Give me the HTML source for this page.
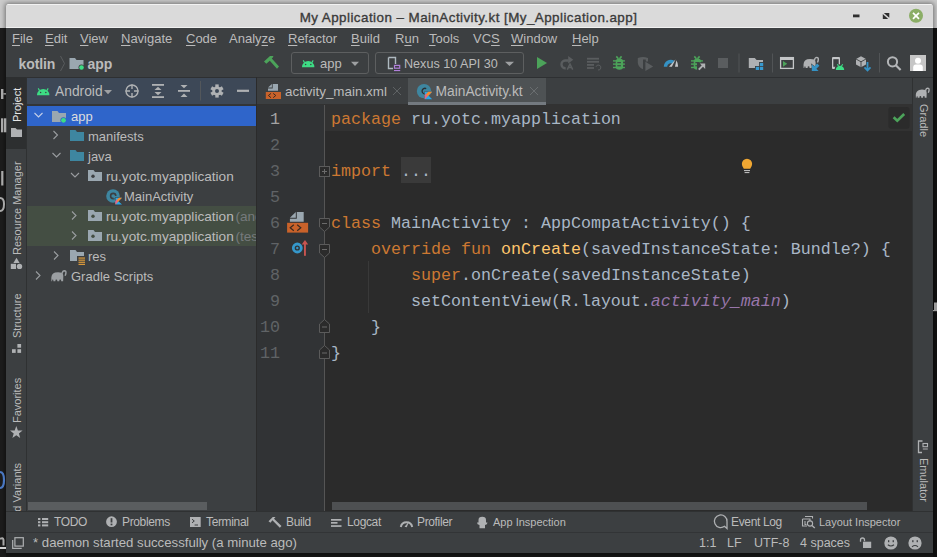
<!DOCTYPE html>
<html><head><meta charset="utf-8">
<style>
*{margin:0;padding:0;box-sizing:border-box}
html,body{width:937px;height:557px;overflow:hidden;background:#161616;font-family:"Liberation Sans",sans-serif;position:relative}
.a{position:absolute}
.t{position:absolute;white-space:nowrap;font-size:13px;color:#bbbbbb;line-height:16px}
.clip{position:absolute;overflow:hidden}
.code{font-family:"Liberation Mono",monospace;font-size:16.67px;color:#a9b7c6;white-space:pre;position:absolute;left:332px;line-height:26px}
.ln{font-family:"Liberation Mono",monospace;font-size:16.67px;color:#606366;position:absolute;width:40px;text-align:right;left:240px;line-height:26px}
.kw{color:#cc7832}.fn{color:#ffc66d}.pu{color:#9876aa;font-style:italic}
.menu{position:absolute;top:32px;font-size:13px;color:#bbbbbb;white-space:nowrap;line-height:14px}
.menu u{text-decoration:underline;text-underline-offset:2px;text-decoration-thickness:1px}
.rl{transform-origin:0 0;transform:rotate(-90deg)}
.rr{transform-origin:0 0;transform:rotate(90deg)}
</style></head><body>
<!-- ===== backdrop ===== -->
<div class="a" style="left:0;top:0;width:937px;height:28px;background:#cbcbcb"></div>
<div class="a" style="left:0;top:28px;width:6px;height:529px;background:#1c1c1c"></div>
<div class="a" style="left:933px;top:28px;width:4px;height:529px;background:#101010"></div>

<!-- ===== window ===== -->
<div class="a" style="left:6px;top:4px;width:927px;height:549px;background:#3c3f41;border-radius:2px 2px 0 0;box-shadow:0 0 5px 1px rgba(0,0,0,0.45)"></div>
<div class="a" style="left:6px;top:4px;width:927px;height:24px;background:#dadada;border-radius:2px 2px 0 0;border-top:1px solid #f2f2f2;border-bottom:1px solid #f0f0f0"></div>
<div class="t" style="left:0;top:10px;width:937px;text-align:center;font-size:13.4px;color:#3a3a3a;font-weight:normal;letter-spacing:0.45px;-webkit-text-stroke:0.35px #3a3a3a">My Application – MainActivity.kt [My_Application.app]</div>

<!-- menu -->
<div class="menu" style="left:12px"><u>F</u>ile</div>
<div class="menu" style="left:45px"><u>E</u>dit</div>
<div class="menu" style="left:80px"><u>V</u>iew</div>
<div class="menu" style="left:121px"><u>N</u>avigate</div>
<div class="menu" style="left:186px"><u>C</u>ode</div>
<div class="menu" style="left:229px">Analy<u>z</u>e</div>
<div class="menu" style="left:288px"><u>R</u>efactor</div>
<div class="menu" style="left:351px"><u>B</u>uild</div>
<div class="menu" style="left:395px">R<u>u</u>n</div>
<div class="menu" style="left:429px"><u>T</u>ools</div>
<div class="menu" style="left:473px">VC<u>S</u></div>
<div class="menu" style="left:511px"><u>W</u>indow</div>
<div class="menu" style="left:572px"><u>H</u>elp</div>

<!-- nav bar -->
<div class="t" style="left:18.5px;top:55.5px;font-weight:bold;font-size:14px;letter-spacing:-0.1px">kotlin</div>
<div class="t" style="left:87.5px;top:55.5px;font-weight:bold;font-size:14px">app</div>

<!-- toolbar combos -->
<div class="a" style="left:291px;top:52px;width:78px;height:22px;border:1px solid #5d5f60;border-radius:3px"></div>
<div class="t" style="left:320px;top:56px">app</div>
<div class="a" style="left:375px;top:52px;width:149px;height:22px;border:1px solid #5d5f60;border-radius:3px"></div>
<div class="t" style="left:404px;top:56px;font-size:12.6px">Nexus 10 API 30</div>
<div class="a" style="left:6px;top:77px;width:927px;height:1px;background:#2e3032"></div>

<!-- ===== left stripe ===== -->
<div class="a" style="left:6px;top:77px;width:20px;height:72px;background:#2d2f30"></div>
<div class="a" style="left:26px;top:77px;width:1px;height:434px;background:#2f3132"></div>

<!-- ===== project panel ===== -->
<div class="a" style="left:27px;top:78px;width:229px;height:26px;background:#3d4857"></div>
<div class="a" style="left:27px;top:104px;width:229px;height:2px;background:#333537"></div>
<div class="a" style="left:27px;top:106px;width:229px;height:20px;background:#2f65ca"></div>
<div class="a" style="left:27px;top:206px;width:229px;height:40px;background:#444e43"></div>
<div class="a" style="left:28px;top:502px;width:179px;height:8px;background:#5a5d5f"></div>
<div class="a" style="left:256px;top:77px;width:1px;height:434px;background:#2b2b2b"></div>
<div class="t" style="left:55px;top:84px;font-size:13.8px">Android</div>
<div class="clip" style="left:27px;top:77px;width:229px;height:434px">
<div class="t" style="left:44px;top:32px;color:#dddddd">app</div>
<div class="t" style="left:61px;top:52px">manifests</div>
<div class="t" style="left:61px;top:72px">java</div>
<div class="t" style="left:79px;top:92px;font-size:13.6px">ru.yotc.myapplication</div>
<div class="t" style="left:97px;top:112px">MainActivity</div>
<div class="t" style="left:79px;top:132px;font-size:13.6px">ru.yotc.myapplication <span style="color:#767a7c;margin-left:-2px">(androidTest)</span></div>
<div class="t" style="left:79px;top:152px;font-size:13.6px">ru.yotc.myapplication <span style="color:#767a7c;margin-left:-2px">(test)</span></div>
<div class="t" style="left:61px;top:172px">res</div>
<div class="t" style="left:44px;top:192px">Gradle Scripts</div>
</div>

<!-- ===== editor ===== -->
<div class="a" style="left:257px;top:104px;width:655px;height:1px;background:#323232"></div>
<div class="a" style="left:408px;top:78px;width:138px;height:26px;background:#4e5254"></div>
<div class="a" style="left:408px;top:102px;width:138px;height:3px;background:#747a80"></div>
<div class="t" style="left:285px;top:84px;font-size:13.4px">activity_main.xml</div>
<div class="t" style="left:435.5px;top:84px;font-size:13.8px">MainActivity.kt</div>
<div class="a" style="left:257px;top:105px;width:655px;height:406px;background:#2b2b2b"></div>
<div class="a" style="left:257px;top:105px;width:67px;height:406px;background:#313335"></div>
<div class="a" style="left:324px;top:105px;width:1px;height:406px;background:#555555"></div>
<div class="a" style="left:325px;top:105px;width:587px;height:26px;background:#323232"></div>
<div class="a" style="left:332px;top:502px;width:535px;height:8px;background:#4e5052"></div>
<div class="a" style="left:401px;top:157px;width:30px;height:26px;background:#3a3a3a"></div>

<div class="ln" style="top:107px;color:#a4a3a3">1</div>
<div class="ln" style="top:133px">2</div>
<div class="ln" style="top:159px">3</div>
<div class="ln" style="top:185px">5</div>
<div class="ln" style="top:211px">6</div>
<div class="ln" style="top:237px">7</div>
<div class="ln" style="top:263px">8</div>
<div class="ln" style="top:289px">9</div>
<div class="ln" style="top:315px">10</div>
<div class="ln" style="top:341px">11</div>
<div class="code" style="left:331px;top:107px"><span class="kw">package</span> ru.yotc.myapplication</div>
<div class="code" style="left:331px;top:159px"><span class="kw">import</span> ...</div>
<div class="code" style="left:331px;top:211px"><span class="kw">class</span> MainActivity : AppCompatActivity() {</div>
<div class="code" style="left:331px;top:237px">    <span class="kw">override fun</span> <span class="fn">onCreate</span>(savedInstanceState: Bundle?) {</div>
<div class="code" style="left:331px;top:263px">        <span class="kw">super</span>.onCreate(savedInstanceState)</div>
<div class="code" style="left:331px;top:289px">        setContentView(R.layout.<span class="pu">activity_main</span>)</div>
<div class="code" style="left:331px;top:315px">    }</div>
<div class="code" style="left:331px;top:341px">}</div>

<!-- ===== right stripe ===== -->
<div class="a" style="left:912px;top:77px;width:1px;height:434px;background:#2f3132"></div>

<!-- ===== bottom toolbar + status ===== -->
<div class="a" style="left:6px;top:511px;width:927px;height:1px;background:#2f3132"></div>
<div class="a" style="left:6px;top:532px;width:927px;height:1px;background:#323436"></div>
<div class="t" style="left:54px;top:514px;font-size:12px;letter-spacing:-0.35px">TODO</div>
<div class="t" style="left:122px;top:514px;font-size:12px;letter-spacing:-0.35px">Problems</div>
<div class="t" style="left:206px;top:514px;font-size:12px;letter-spacing:-0.35px">Terminal</div>
<div class="t" style="left:286px;top:514px;font-size:12px;letter-spacing:-0.35px">Build</div>
<div class="t" style="left:347px;top:514px;font-size:12px;letter-spacing:-0.35px">Logcat</div>
<div class="t" style="left:417px;top:514px;font-size:12px;letter-spacing:-0.35px">Profiler</div>
<div class="t" style="left:493px;top:514px;font-size:11px">App Inspection</div>
<div class="t" style="left:731px;top:514px;font-size:12px;letter-spacing:-0.35px">Event Log</div>
<div class="t" style="left:819px;top:514px;font-size:11px">Layout Inspector</div>
<div class="t" style="left:33px;top:535px;font-size:13.2px">* daemon started successfully (a minute ago)</div>
<div class="t" style="left:699px;top:535px;font-size:12.5px">1:1</div>
<div class="t" style="left:727px;top:535px;font-size:12.5px">LF</div>
<div class="t" style="left:754px;top:535px;font-size:12.5px">UTF-8</div>
<div class="t" style="left:800px;top:535px;font-size:12.5px">4 spaces</div>

<!-- ===== stripe texts ===== -->
<div class="clip" style="left:6px;top:77px;width:20px;height:434px">
<div class="t rl" style="left:3px;top:45px;color:#e8e8e8;font-size:11px">Project</div>
<div class="t rl" style="left:3px;top:178px;font-size:11px">Resource Manager</div>
<div class="t rl" style="left:3px;top:261px;font-size:11px">Structure</div>
<div class="t rl" style="left:3px;top:345.5px;font-size:11px">Favorites</div>
<div class="t rl" style="left:3px;top:453px;font-size:11px">Build Variants</div>
</div>
<div class="clip" style="left:913px;top:77px;width:20px;height:434px">
<div class="t rr" style="left:18.5px;top:27px;font-size:11px">Gradle</div>
<div class="t rr" style="left:18.5px;top:381px;font-size:11px">Emulator</div>
</div>

<!-- ICONS -->
<svg class="a" style="left:0;top:0;pointer-events:none" width="937" height="557" viewBox="0 0 937 557">
<defs>
 <g id="droid"><path d="M0,6.2 A6.2,6.2 0 0 1 12.4,6.2 Z" fill="#3ddc84"/><path d="M2.6,1.6 L1.2,-0.6 M9.8,1.6 L11.2,-0.6" stroke="#3ddc84" stroke-width="1.1"/><circle cx="3.6" cy="3.6" r="0.75" fill="#3c3f41"/><circle cx="8.8" cy="3.6" r="0.75" fill="#3c3f41"/></g>
 <g id="eleph"><path fill="currentColor" d="M0.2,11.5 L0.1,8 Q0.5,3.6 4,2.6 Q7.5,1.8 11,2.8 Q12.4,3.5 12.5,6 L12.3,11.5 H10.3 L10.1,9.9 Q9.3,9.3 8.5,9.9 L8.3,11.5 H6.3 L6.1,9.9 Q5.3,9.3 4.5,9.9 L4.3,11.5 H2.3 L2.1,9.9 Q1.5,9.6 1.1,10 L0.9,11.5 Z"/><path fill="none" stroke="currentColor" stroke-width="1.5" d="M11.2,3.6 Q11.8,0.6 13.6,0.6 Q15.4,0.7 15.2,2.8 Q15,4.5 14.3,5.8"/></g>
</defs>
<!-- title buttons -->
<rect x="853" y="14.5" width="6.5" height="2.8" fill="#2f2f2f"/>
<path d="M884.3,12.9 H889.3 V17.4 L887.7,18.9 H882.8 V14.4 Z" fill="#2f2f2f"/><path d="M883,13.2 L889,18.6" stroke="#dadada" stroke-width="1.5"/>
<circle cx="916" cy="15.8" r="7" fill="#8bae66"/>
<path d="M913,12.8 L919,18.8 M919,12.8 L913,18.8" stroke="#fff" stroke-width="1.7"/>

<!-- nav bar -->
<path d="M60.5,56 L64.5,63.5 L60.5,71" fill="none" stroke="#595c5e" stroke-width="1"/>
<path d="M69.5,58 H75 L76.5,60 H83.5 V69 H69.5 Z" fill="#9aa7b0"/>
<circle cx="81.5" cy="67.5" r="3" fill="#3c3f41"/><circle cx="81.5" cy="67.5" r="2.3" fill="#3ddc84"/>

<!-- hammer -->
<path d="M264,61.5 L270,56.1 L273.2,56.1 L273.2,56.9 L271.8,58.5 L279,66.5 L277,68.8 L269.8,60.8 L266.3,63.7 Z" fill="#4ca35a"/>
<!-- combo app -->
<use href="#droid" transform="translate(302,61)"/>
<path d="M351,61.8 H359 L355,66 Z" fill="#9ea0a2"/>
<!-- combo nexus -->
<path d="M388.5,57.5 H395.5 V64 M393,68.5 H388.5 V57.5" fill="none" stroke="#aeb9c0" stroke-width="1.4"/>
<rect x="394.5" y="65.4" width="5.2" height="2.8" fill="none" stroke="#b07fd9" stroke-width="1.2"/>
<rect x="394" y="70" width="6.2" height="1.1" fill="#b07fd9"/>
<path d="M505,61.8 H514 L509.5,66 Z" fill="#9ea0a2"/>

<!-- run -->
<path d="M537,57 L547,63 L537,69 Z" fill="#4ca35a"/>
<!-- rerun (disabled) -->
<path d="M568.6,60.5 H565.1 A3.9,3.9 0 0 0 565.7,68.3" fill="none" stroke="#5a5d5f" stroke-width="2.4"/>
<path d="M568.2,56 L573.3,59.8 L568.2,63.4 Z" fill="#5a5d5f"/>
<path d="M567.3,69.6 L570,64 L572.7,69.6 M568.5,67.6 H571.5" fill="none" stroke="#5a5d5f" stroke-width="1.5"/>
<!-- apply changes -->
<g fill="#5a5d5f"><rect x="587" y="57.8" width="12" height="1.8"/><rect x="587" y="60.9" width="12" height="1.8"/><rect x="587" y="64" width="7" height="1.8"/><rect x="587" y="67.1" width="7" height="1.8"/></g>
<path d="M596,66.8 A2.5,2.5 0 1 1 598,70" fill="none" stroke="#5a5d5f" stroke-width="1"/>
<!-- debug bug -->
<g id="bug"><g fill="#4ca35a"><rect x="615.7" y="58.6" width="7.4" height="11.2" rx="3.7" ry="3.2"/><rect x="613" y="60.2" width="11.9" height="1.4"/><rect x="613" y="63.4" width="11.9" height="1.4"/><rect x="613" y="66.8" width="11.9" height="1.4"/></g>
<path d="M616.3,56.4 L618.4,58.8 M621.6,56.4 L619.5,58.8" stroke="#4ca35a" stroke-width="1.6"/>
<rect x="617.3" y="62.1" width="3.6" height="1.1" fill="#3c3f41"/><rect x="617.3" y="65.2" width="3.6" height="1.1" fill="#3c3f41"/></g>
<!-- coverage shield -->
<path d="M637.8,58 Q641,57 643,57 Q645,57 648,58 V61.5 H645.8 V59.6 H643 V69.2 Q638.5,67.5 637.8,63 Z" fill="#5a5d5f"/>
<path d="M645.4,61.8 L653.2,66.4 L645.4,71 Z" fill="#5a5d5f"/>
<!-- profiler -->
<path d="M663.8,66.8 A7,7 0 0 1 674.3,60.74 L672.6,63.68 A3.6,3.6 0 0 0 667.2,66.8 Z" fill="#3592c4"/>
<path d="M669,66.8 L671.9,66.8 L675.6,59.2 Z" fill="#c4c6c8"/>
<path d="M675,66.8 H678.1 Q677.9,62.6 676.4,60.3 Z" fill="#c4c6c8"/>
<!-- attach debugger -->
<use href="#bug" transform="translate(78,0)"/>
<rect x="697" y="62.3" width="9" height="9" fill="#3c3f41"/>
<path d="M698.8,69.6 L703.5,64.9" stroke="#afb1b3" stroke-width="2"/>
<path d="M699.8,63.6 H705.2 V69 Z" fill="#afb1b3"/>
<!-- stop -->
<rect x="718" y="58" width="10" height="10" fill="#5a5d5f"/>
<rect x="738.5" y="53.5" width="1" height="19" fill="#515456"/>
<!-- project structure -->
<path d="M748.8,58 H754.8 L756.6,60 H763 V62.1 H759.1 V66 H755 V67.9 H748.8 Z" fill="#afb1b3"/>
<g fill="#389ad0"><rect x="759.9" y="62.9" width="3.3" height="3.1"/><rect x="755.8" y="66.8" width="3.3" height="3.2"/><rect x="759.9" y="66.8" width="3.3" height="3.2"/></g>
<rect x="772" y="53.5" width="1" height="19" fill="#515456"/>
<!-- run anything window -->
<rect x="780.6" y="57.6" width="12.8" height="10.8" fill="none" stroke="#c4c6c8" stroke-width="1.3"/>
<rect x="780" y="57" width="14" height="3" fill="#c4c6c8"/>
<path d="M783,60.9 L787.2,63.8 L783,66.8 Z" fill="#4ca35a"/>
<!-- gradle sync -->
<use href="#eleph" style="color:#afb1b3" transform="translate(803.4,56.8) scale(0.98,0.98)"/>
<path d="M810.8,63.2 L813.2,70.6 L820,70.2 Z" fill="#3c3f41"/>
<path d="M811.8,64.3 V71 H818.6 L816.4,68.8 L819.4,65.8 L817.2,63.6 L814.2,66.6 Z" fill="#3592c4"/>
<!-- device manager -->
<path d="M833,57 H839 Q840,57 840,58 V68 Q840,69 839,69 H833 Q832,69 832,68 V58 Q832,57 833,57 Z" fill="#c4c6c8"/>
<rect x="833.3" y="59.2" width="5.4" height="7.6" fill="#3c3f41"/>
<path d="M834.5,70.8 V69.5 A5.3,5.3 0 0 1 845.1,69.5 V70.8 Z" fill="#3c3f41"/>
<path d="M835.8,69.9 A4.2,4.2 0 0 1 844.2,69.9 Z" fill="#3ddc84"/>
<path d="M837.3,64.3 L838.6,66.3 M842.7,64.3 L841.4,66.3" stroke="#3ddc84" stroke-width="1.1"/>
<!-- sdk manager -->
<path d="M856,59 L861,56.2 L866,59 V64.5 L861,67.3 L856,64.5 Z" fill="#afb1b3"/>
<path d="M856,59 L861,61.8 L866,59 M861,61.8 V67.3" fill="none" stroke="#3c3f41" stroke-width="0.9"/>
<path d="M867.5,62 V70 M864.5,67.3 L867.5,70.5 L870.5,67.3" fill="none" stroke="#3592c4" stroke-width="1.8"/>
<rect x="879" y="53" width="1" height="19.5" fill="#515456"/>
<!-- search -->
<circle cx="892.5" cy="61.8" r="4.6" fill="none" stroke="#b4b6b8" stroke-width="2"/>
<path d="M895.8,65.3 L900.6,70" stroke="#b4b6b8" stroke-width="2.2"/>
<!-- avatar -->
<rect x="910" y="55" width="16" height="16" fill="#c6c6c6"/>
<circle cx="918" cy="60.8" r="3" fill="#fff"/>
<path d="M913.2,71 V67.5 Q913.2,64.6 916,64.6 H920 Q922.8,64.6 922.8,67.5 V71 Z" fill="#fff"/>

<!-- project header icons -->
<use href="#droid" transform="translate(37,89)"/>
<path d="M104,90 H112 L108,94.3 Z" fill="#9ea0a2"/>
<circle cx="132" cy="91" r="6" fill="none" stroke="#afb1b3" stroke-width="1.4"/>
<path d="M132,84.5 V89 M132,93 V97.5 M125.5,91 H130 M134,91 H138.5" stroke="#afb1b3" stroke-width="1.4"/>
<g fill="#afb1b3"><rect x="152" y="84" width="12" height="1.8"/><rect x="152" y="96.2" width="12" height="1.8"/><path d="M154.5,90 L158,86.8 L161.5,90 Z"/><path d="M154.5,92 L158,95.2 L161.5,92 Z"/></g>
<g fill="#afb1b3"><rect x="178" y="90" width="12" height="1.8"/><path d="M180.5,85 L184,88.2 L187.5,85 Z"/><path d="M180.5,97 L184,93.6 L187.5,97 Z"/></g>
<rect x="200" y="81" width="1" height="19.5" fill="#53575b"/>
<g transform="translate(217,91)"><circle r="4.6" fill="#afb1b3"/><g fill="#afb1b3"><rect x="-1.7" y="-6.6" width="3.4" height="13.2"/><rect x="-1.7" y="-6.6" width="3.4" height="13.2" transform="rotate(60)"/><rect x="-1.7" y="-6.6" width="3.4" height="13.2" transform="rotate(120)"/></g><circle r="2" fill="#3d4857"/></g>
<rect x="237" y="89.7" width="12" height="2.2" fill="#afb1b3"/>

<!-- tree icons -->
<path d="M34.5,113 L38.5,117 L42.5,113" fill="none" stroke="#c5cfe8" stroke-width="1.1"/>
<path d="M52,111 H57.5 L59,113 H66 V122 H52 Z" fill="#9aa7b0"/>
<circle cx="63.5" cy="120.3" r="3.1" fill="#2f65ca"/><circle cx="63.5" cy="120.3" r="2.4" fill="#3ddc84"/>
<path d="M53.5,131 L57.5,135 L53.5,139" fill="none" stroke="#9a9da0" stroke-width="1.1"/>
<path d="M70,130 H75.5 L77,132 H84 V141 H70 Z" fill="#3e86a0"/>
<path d="M52.5,153 L56.5,157 L60.5,153" fill="none" stroke="#9a9da0" stroke-width="1.1"/>
<path d="M70,150 H75.5 L77,152 H84 V161 H70 Z" fill="#3e86a0"/>
<path d="M71,173 L75,177 L79,173" fill="none" stroke="#9a9da0" stroke-width="1.1"/>
<path d="M88,170 H93.5 L95,172 H102 V181 H88 Z" fill="#9aa7b0"/><circle cx="93" cy="176.3" r="1.7" fill="#3c3f41"/>
<!-- MainActivity kotlin class icon -->
<circle cx="113" cy="196" r="6.8" fill="#3e86a0"/>
<circle cx="113.2" cy="196" r="2.6" fill="none" stroke="#3c3f41" stroke-width="1.6"/>
<rect x="113.5" y="196" width="4" height="2.5" fill="#3e86a0"/>
<path d="M115,197.2 H122.6 L119,201 L122.6,204.8 H115 Z" fill="#3c3f41"/>
<path d="M115.5,197.7 H122 L118.4,201.2 L122,204.4 H115.5 Z" fill="#27a7e8"/>
<path d="M119,197.7 H122 L115.5,204.4 V201 Z" fill="#f88a2a"/>
<path d="M117.2,202.6 L115.5,204.4 V201 L117.3,199.2 Z" fill="#d55fa6"/>
<path d="M72,211.5 L76,215.5 L72,219.5" fill="none" stroke="#9a9da0" stroke-width="1.1"/>
<path d="M88,210 H93.5 L95,212 H102 V221 H88 Z" fill="#9aa7b0"/><circle cx="93" cy="216.3" r="1.7" fill="#444e43"/>
<path d="M72,231.5 L76,235.5 L72,239.5" fill="none" stroke="#9a9da0" stroke-width="1.1"/>
<path d="M88,230 H93.5 L95,232 H102 V241 H88 Z" fill="#9aa7b0"/><circle cx="93" cy="236.3" r="1.7" fill="#444e43"/>
<path d="M54,251.5 L58,255.5 L54,259.5" fill="none" stroke="#9a9da0" stroke-width="1.1"/>
<path d="M70,250 H75.5 L77,252 H84 V261 H70 Z" fill="#9aa7b0"/>
<rect x="77" y="256" width="9" height="9" fill="#3c3f41"/>
<g fill="#e9a23b"><rect x="78.5" y="257.5" width="6.5" height="1.1"/><rect x="78.5" y="259.6" width="6.5" height="1.1"/><rect x="78.5" y="261.7" width="6.5" height="1.1"/><rect x="78.5" y="263.8" width="6.5" height="1.1"/></g>
<path d="M36,271.5 L40,275.5 L36,279.5" fill="none" stroke="#9a9da0" stroke-width="1.1"/>
<!-- elephant -->
<use href="#eleph" style="color:#9b9fa2" transform="translate(51.2,270.1) scale(0.97)"/>

<!-- stripe icons -->
<path d="M11,128 H15.5 L17,129.5 H22 V137 H11 Z" fill="#afb1b3"/>
<path d="M16.5,257.8 L19.6,263 H13.4 Z" fill="#afb1b3"/>
<rect x="10.8" y="263.8" width="5.2" height="5.2" fill="#afb1b3"/>
<circle cx="19.5" cy="266.4" r="2.7" fill="#afb1b3"/>
<g fill="#afb1b3"><rect x="17.4" y="344" width="3.7" height="3.7"/><rect x="12" y="349.2" width="3.7" height="3.7"/><rect x="17.4" y="349.2" width="3.7" height="3.7"/></g>
<path d="M16.3,426 L17.9,430.4 L22.6,430.5 L18.9,433.4 L20.2,437.9 L16.3,435.2 L12.4,437.9 L13.7,433.4 L10,430.5 L14.7,430.4 Z" fill="#afb1b3"/>
<!-- gradle stripe elephant -->
<use href="#eleph" style="color:#afb1b3" transform="translate(915.7,87.6) scale(0.88)"/>
<!-- emulator icon -->
<path d="M922.5,441 H918.5 V452.5 H922" fill="none" stroke="#afb1b3" stroke-width="1.3"/>
<rect x="923" y="443.5" width="4.5" height="3.2" fill="none" stroke="#afb1b3" stroke-width="1.1"/>
<rect x="922.8" y="448.5" width="5" height="1" fill="#afb1b3"/>

<!-- tab icons -->
<path d="M272.7,84.1 H278 V90.7 H268 V88.4 H272.7 Z" fill="#9aa7b0"/><path d="M268,87.6 L271.9,84.1 V87.6 Z" fill="#9aa7b0"/>
<rect x="265.8" y="92" width="15.2" height="7" fill="#c9622a"/>
<path d="M271,93.4 L268.4,95.5 L271,97.7 M273.2,93.4 L275.8,95.5 L273.2,97.7" fill="none" stroke="#3a2a20" stroke-width="1"/>
<path d="M393,87 L401,95 M401,87 L393,95" stroke="#5e6264" stroke-width="1"/>
<circle cx="424" cy="91.1" r="7.2" fill="#3e86a0"/>
<path d="M426.2,88.6 A2.8,2.8 0 1 0 425.5,93.8" fill="none" stroke="#2b2f33" stroke-width="1.3"/>
<path d="M424.3,91.3 H433 L429.4,95.5 L433,99.7 H424.3 Z" fill="#4e5254"/>
<path d="M424.8,91.8 H432.2 L428.5,95.5 L432.2,99.2 H424.8 Z" fill="#27a7e8"/>
<path d="M428.3,91.8 H432.2 L424.8,99.2 V95.3 Z" fill="#f88a2a"/>
<path d="M426.5,97.5 L424.8,99.2 V95.3 L426.6,93.5 Z" fill="#d55fa6"/>
<path d="M530,87 L538,95 M538,87 L530,95" stroke="#6a6e70" stroke-width="1"/>

<!-- gutter icons -->
<path d="M296.8,212.1 H303.7 V221.8 H289.9 V218.8 H296.8 Z" fill="#9aa7b0"/><path d="M289.9,217.8 L295.8,212.1 V217.8 Z" fill="#9aa7b0"/>
<rect x="287.1" y="222.8" width="21" height="9.8" fill="#c9622a"/>
<path d="M293.8,224.7 L290.2,227.7 L293.8,230.7 M297.2,224.7 L300.8,227.7 L297.2,230.7" fill="none" stroke="#3a2a20" stroke-width="1.2"/>
<circle cx="297.3" cy="248" r="4" fill="none" stroke="#3598cb" stroke-width="2.8"/>
<circle cx="297.3" cy="248" r="1.2" fill="#3598cb"/>
<rect x="304" y="243" width="1.9" height="12.8" fill="#c75450"/>
<path d="M301.7,244.5 L305,240 L308.2,244.5 Z" fill="#c75450"/>
<!-- fold markers -->
<g fill="#2b2b2b" stroke="#5b5b5b" stroke-width="1">
<rect x="319.5" y="166.5" width="10" height="10"/>
<path d="M319.5,218.5 H329.5 V227 L324.5,231.5 L319.5,227 Z"/>
<path d="M319.5,244.5 H329.5 V253 L324.5,257.5 L319.5,253 Z"/>
<path d="M319.5,332.5 H329.5 V324 L324.5,319.5 L319.5,324 Z"/>
<path d="M319.5,358.5 H329.5 V350 L324.5,345.5 L319.5,350 Z"/>
</g>
<path d="M322,171.5 H327 M324.5,169 V174 M322,223.5 H327 M322,249.5 H327 M322,327 H327 M322,353 H327" stroke="#6b6b6b" stroke-width="1"/>
<rect x="368" y="261" width="1" height="52" fill="#393939"/>
<!-- lightbulb -->
<path d="M747,158.8 A5.15,5.15 0 0 1 752.15,164 Q752.1,166.3 750.2,168.8 H743.8 Q741.9,166.3 741.85,164 A5.15,5.15 0 0 1 747,158.8 Z" fill="#f0a732"/>
<path d="M744,170.6 H750 M744.6,172.6 H749.4" stroke="#c9c9c9" stroke-width="1"/>
<!-- check -->
<rect x="888.3" y="107.1" width="21.3" height="21.7" rx="3" fill="#2b2b2b"/>
<path d="M893.6,117.3 L897.3,120.8 L904.2,114" fill="none" stroke="#4ca35a" stroke-width="2.6"/>

<!-- bottom toolbar icons -->
<g fill="#afb1b3">
<rect x="38" y="518" width="2.4" height="2"/><rect x="42" y="518" width="6.2" height="2"/>
<rect x="38" y="521.2" width="2.4" height="2"/><rect x="42" y="521.2" width="6.2" height="2"/>
<rect x="38" y="524.4" width="2.4" height="2"/><rect x="42" y="524.4" width="6.2" height="2"/>
</g>
<circle cx="111.5" cy="521.7" r="5.4" fill="#afb1b3"/>
<rect x="110.6" y="518.2" width="1.8" height="4.3" fill="#3c3f41"/><rect x="110.6" y="523.6" width="1.8" height="1.7" fill="#3c3f41"/>
<rect x="190" y="517" width="10.7" height="10" fill="#afb1b3"/>
<path d="M192,519.2 L194.3,521 L192,522.8 M194.6,525 H198" fill="none" stroke="#3c3f41" stroke-width="1"/>
<path d="M268.5,521.2 L272.8,517 L275.5,517 L274,518.8 L281.5,526 L279.8,527.8 L272.4,520.3 L270.5,522.8 Z" fill="#afb1b3"/>
<g fill="#afb1b3"><rect x="331" y="519" width="10.5" height="1.7"/><rect x="331" y="522" width="6.5" height="1.7"/><rect x="331" y="525.2" width="10.5" height="1.7"/></g>
<path d="M400.8,527 A5.8,5.8 0 0 1 412.2,527" fill="none" stroke="#afb1b3" stroke-width="2"/>
<path d="M404.5,526.8 L409,521.5 L406.8,527.3 Z" fill="#afb1b3"/>
<path d="M479.5,528.3 V525 Q477,524.5 477,522.5 H478.5 V520 Q478.5,516.8 482.3,516.8 Q486,516.8 486,520 V522.5 H487.5 Q487.5,524.5 485,525 V528.3 Z" fill="#afb1b3"/>
<path d="M727,528.6 L724.5,526.3 A6.3,6.3 0 1 1 727,521.6 Z" fill="none" stroke="#afb1b3" stroke-width="1.3"/>
<path d="M805,516.5 H812.5 V518.5 M802.5,519 H810 V521 M802.5,519 V526 H807" fill="none" stroke="#afb1b3" stroke-width="1.1"/>
<path d="M805,521 V524.5 H806.5" fill="none" stroke="#afb1b3" stroke-width="1.1"/>
<circle cx="810" cy="523.5" r="2.6" fill="none" stroke="#afb1b3" stroke-width="1.1"/>
<path d="M811.9,525.4 L814.8,528" stroke="#afb1b3" stroke-width="1.3"/>

<!-- status icons -->
<path d="M12.7,540 V548.4 H21.7" fill="none" stroke="#afb1b3" stroke-width="1.2"/>
<rect x="14.9" y="537.7" width="8.4" height="8.4" fill="none" stroke="#afb1b3" stroke-width="1.2"/>
<path d="M860.5,541.7 V540 A2,2 0 0 1 864.5,540 V541.2" fill="none" stroke="#afb1b3" stroke-width="1.3"/>
<rect x="863" y="541.7" width="8.2" height="6.3" fill="#afb1b3"/>
<circle cx="890.9" cy="543" r="6.6" fill="#afb1b3"/>
<rect x="888" y="540.2" width="1.3" height="2" fill="#3c3f41"/><rect x="892.6" y="540.2" width="1.3" height="2" fill="#3c3f41"/>
<path d="M887.8,544.8 Q890.9,547.3 894,544.8" fill="none" stroke="#3c3f41" stroke-width="1.1"/>
<circle cx="915" cy="543" r="6.6" fill="#afb1b3"/>
<rect x="912.2" y="540.2" width="1.3" height="2" fill="#3c3f41"/><rect x="916.6" y="540.2" width="1.3" height="2" fill="#3c3f41"/>
<path d="M912,546.8 Q915,544.2 918,546.8" fill="none" stroke="#3c3f41" stroke-width="1.1"/>

<!-- background fragments left of window -->
<g fill="#a9a9a9">
<rect x="1" y="89" width="2.4" height="10"/><rect x="3.4" y="93.2" width="2.6" height="1.3"/>
<rect x="1" y="118.3" width="2.3" height="14"/><rect x="4" y="118.3" width="2.3" height="14"/>
<rect x="1.2" y="171" width="2.2" height="14.5"/>
<rect x="0" y="547" width="6" height="2" fill="#d0d0d0"/>
</g>
<path d="M0,198 Q4,198 4,204 Q4,211 0,211" fill="none" stroke="#a9a9a9" stroke-width="2"/>
<path d="M0,472 Q4,472 4,480 Q4,488 0,488" fill="none" stroke="#4a78c2" stroke-width="2.2"/>
<path d="M0,539 Q3,537 3.5,540 V545.5" fill="none" stroke="#a9a9a9" stroke-width="2"/>
<rect x="934" y="302.5" width="3" height="8.5" fill="#9a9a9a"/><rect x="933" y="310" width="4" height="1.2" fill="#9a9a9a"/>
</svg>

</body></html>
